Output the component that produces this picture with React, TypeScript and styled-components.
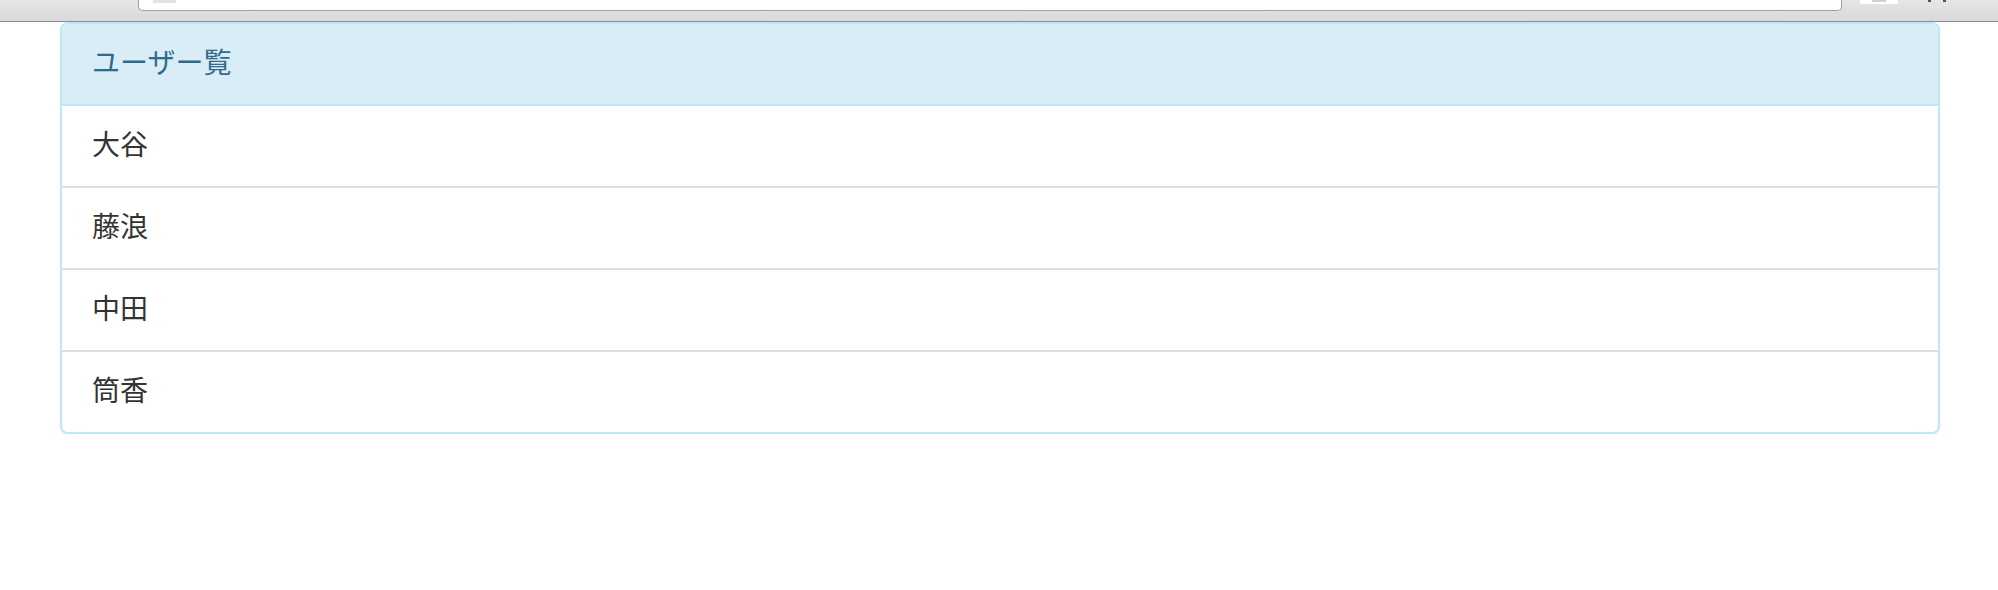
import React from "react";
import styled, { createGlobalStyle } from "styled-components";

const Global = createGlobalStyle`
  html, body { margin: 0; padding: 0; background: #fff; }
  body {
    font-family: "Helvetica Neue", "Liberation Sans", "Noto Sans CJK JP", sans-serif;
    color: #333;
  }
`;

const Chrome = styled.div`
  height: 21px;
  border-bottom: 1px solid #8c8c8c;
  background: linear-gradient(#e6e6e6, #d9d9d9);
  display: flex;
  align-items: flex-start;
  padding-left: 138px;
  box-sizing: content-box;
`;

const AddressField = styled.div`
  width: 1704px;
  height: 11px;
  box-sizing: border-box;
  background: #fff;
  border: 1px solid #a0a0a0;
  border-top: none;
  border-radius: 0 0 5px 5px;
  padding-left: 14px;
`;

const Favicon = styled.div`
  width: 23px;
  height: 3px;
  background: #e2e2e2;
`;

const Badge = styled.div`
  margin-left: 18px;
  width: 38px;
  height: 4px;
  background: #fff;
  font-size: 3px;
  line-height: 3px;
  color: #888;
  text-align: center;
  overflow: hidden;
`;

const ToolGlyph = styled.div`
  margin-left: ${(p: { $gap: number }) => p.$gap}px;
  width: 3px;
  height: 2px;
  background: #555;
`;

const Panel = styled.div`
  margin-left: 60px;
  width: 1880px;
  box-sizing: border-box;
  border: 2px solid #bce8f1;
  border-radius: 8px;
  overflow: hidden;
  box-shadow: 0 2px 2px rgba(0, 0, 0, 0.05);
`;

const Heading = styled.div`
  background: #d9edf7;
  color: #2f6c8c;
  padding: 20px 30px;
  font-size: 28px;
  font-weight: 400;
  line-height: 40px;
  border-bottom: 2px solid #bce8f1;
`;

const List = styled.ul`
  list-style: none;
  margin: 0;
  padding: 0;
`;

const Item = styled.li`
  padding: 20px 30px;
  font-size: 28px;
  line-height: 40px;
  color: #333;
  background: #fff;
  & + & {
    border-top: 2px solid #dddddd;
  }
`;

const users = ["大谷", "藤浪", "中田", "筒香"];

export default function App() {
  return (
    <>
      <Global />
      <Chrome>
        <AddressField>
          <Favicon />
        </AddressField>
        <Badge>Marionette</Badge>
        <ToolGlyph $gap={30} />
        <ToolGlyph $gap={12} />
      </Chrome>
      <Panel>
        <Heading>ユーザー覧</Heading>
        <List>
          {users.map((u) => (
            <Item key={u}>{u}</Item>
          ))}
        </List>
      </Panel>
    </>
  );
}
